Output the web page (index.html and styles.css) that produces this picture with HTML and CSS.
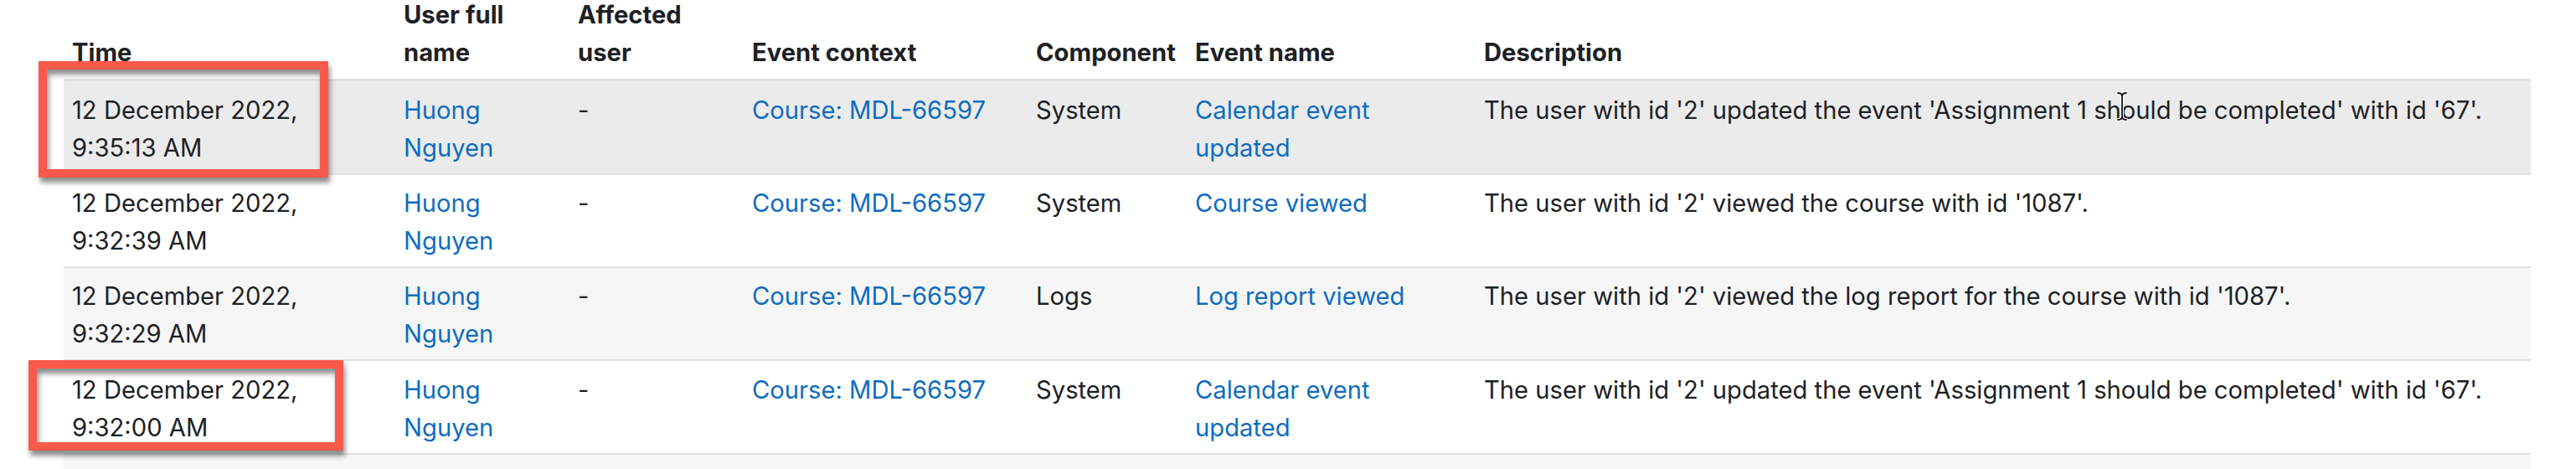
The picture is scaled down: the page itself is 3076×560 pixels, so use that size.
FILE: index.html
```html
<!DOCTYPE html>
<html lang="en">
<head>
<meta charset="utf-8">
<title>Logs</title>
<link rel="stylesheet" href="styles.css">
</head>
<body>
<div class="page">
  <table class="logtable">
    <colgroup>
      <col class="c-time"><col class="c-user"><col class="c-aff"><col class="c-ctx"><col class="c-comp"><col class="c-name"><col class="c-desc">
    </colgroup>
    <thead>
      <tr>
        <th>Time</th>
        <th>User full<br>name</th>
        <th>Affected<br>user</th>
        <th>Event context</th>
        <th>Component</th>
        <th>Event name</th>
        <th>Description</th>
      </tr>
    </thead>
    <tbody>
      <tr class="hover">
        <td>12 December 2022,<br>9:35:13 AM</td>
        <td><a href="#">Huong<br>Nguyen</a></td>
        <td>-</td>
        <td><a href="#">Course: MDL-66597</a></td>
        <td>System</td>
        <td><a href="#">Calendar event<br>updated</a></td>
        <td>The user with id '2' updated the event 'Assignment 1 should be completed' with id '67'.</td>
      </tr>
      <tr>
        <td>12 December 2022,<br>9:32:39 AM</td>
        <td><a href="#">Huong<br>Nguyen</a></td>
        <td>-</td>
        <td><a href="#">Course: MDL-66597</a></td>
        <td>System</td>
        <td><a href="#">Course viewed</a></td>
        <td>The user with id '2' viewed the course with id '1087'.</td>
      </tr>
      <tr class="striped">
        <td>12 December 2022,<br>9:32:29 AM</td>
        <td><a href="#">Huong<br>Nguyen</a></td>
        <td>-</td>
        <td><a href="#">Course: MDL-66597</a></td>
        <td>Logs</td>
        <td><a href="#">Log report viewed</a></td>
        <td>The user with id '2' viewed the log report for the course with id '1087'.</td>
      </tr>
      <tr>
        <td>12 December 2022,<br>9:32:00 AM</td>
        <td><a href="#">Huong<br>Nguyen</a></td>
        <td>-</td>
        <td><a href="#">Course: MDL-66597</a></td>
        <td>System</td>
        <td><a href="#">Calendar event<br>updated</a></td>
        <td>The user with id '2' updated the event 'Assignment 1 should be completed' with id '67'.</td>
      </tr>
      <tr class="striped filler">
        <td></td><td></td><td></td><td></td><td></td><td></td><td></td>
      </tr>
    </tbody>
  </table>
  <div class="mark mark-1"></div>
  <div class="mark mark-2"></div>
  <svg class="ibeam" width="16" height="36" viewBox="0 0 16 36" aria-hidden="true">
    <path d="M3 2 Q8 2 8 6 Q8 2 13 2 M8 6 L8 30 M3 34 Q8 34 8 30 Q8 34 13 34" fill="none" stroke="#fff" stroke-width="4" stroke-linecap="round"/>
    <path d="M3 2 Q8 2 8 6 Q8 2 13 2 M8 6 L8 30 M3 34 Q8 34 8 30 Q8 34 13 34" fill="none" stroke="#111" stroke-width="1.8" stroke-linecap="round"/>
  </svg>
</div>
</body>
</html>
```

FILE: styles.css
```css
html, body {
  margin: 0;
  padding: 0;
  background: #ffffff;
}

.page {
  position: relative;
  height: 560px;
  overflow: hidden;
  padding: 0 54px 0 76px;
  font-family: Inter, "Noto Sans", "Liberation Sans", sans-serif;
  font-size: 29.2px;
  line-height: 45px;
  color: #1d2125;
}

.logtable {
  width: 100%;
  table-layout: fixed;
  border-collapse: collapse;
  margin-top: -5px;
}

.c-time { width: 396px; }
.c-user { width: 208px; }
.c-aff { width: 208px; }
.c-ctx { width: 339px; }
.c-comp { width: 190px; }
.c-name { width: 345px; }

.logtable th {
  text-align: left;
  vertical-align: bottom;
  font-weight: 700;
  padding: 0 10px 9.4px 10px;
  border-bottom: 3px solid #dee2e6;
  white-space: nowrap;
}

.logtable td {
  vertical-align: top;
  padding: 11.3px 10px 8px 10px;
  border-bottom: 2px solid #dee2e6;
}

.logtable tr.filler td {
  height: 90px;
}

.logtable tr.hover td {
  background: #ebebeb;
}

.logtable tr.striped td {
  background: #f6f6f6;
}

.logtable a {
  color: #0f6cbf;
  text-decoration: none;
}

.mark {
  position: absolute;
  box-sizing: border-box;
  border: 10px solid #fa5a4b;
  box-shadow: 2px 6px 6px rgba(0, 0, 0, 0.45), inset 2px 6px 6px rgba(0, 0, 0, 0.45);
}

.mark-1 {
  left: 46px;
  top: 73px;
  width: 346px;
  height: 139px;
}

.mark-2 {
  left: 34px;
  top: 430px;
  width: 376px;
  height: 108px;
}

.ibeam {
  position: absolute;
  left: 2526px;
  top: 109px;
}
```
